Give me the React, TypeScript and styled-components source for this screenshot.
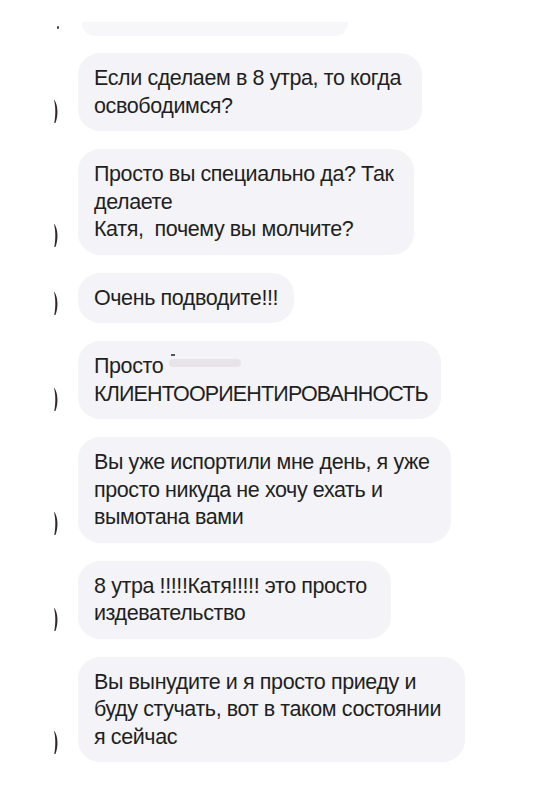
import React from "react";
import styled, { createGlobalStyle } from "styled-components";

const Global = createGlobalStyle`
  html, body { margin: 0; padding: 0; background: #ffffff; }
  body { font-family: "Liberation Sans", Arial, sans-serif; }
`;

const Page = styled.div`
  width: 543px;
  height: 800px;
  overflow: hidden;
  background: #ffffff;
  display: flex;
  flex-direction: column;
  gap: 18px;
  padding-top: 22px;
  box-sizing: border-box;
`;

const Row = styled.div`
  display: flex;
  align-items: flex-end;
`;

const AvatarCol = styled.div<{ $lift: number }>`
  width: 78px;
  flex: none;
  display: flex;
  justify-content: flex-end;
  padding-right: 19px;
  box-sizing: border-box;
  padding-bottom: ${(p) => p.$lift}px;
`;

const AvatarEdge = styled.svg`
  display: block;
`;

const Bubble = styled.div<{ $padRight: number }>`
  background: #f3f3f8;
  border-radius: 22px;
  padding: 12px ${(p) => p.$padRight}px 11px 16px;
  color: #1f1f22;
  font-size: 21.5px;
  line-height: 27.5px;
  letter-spacing: -0.4px;
`;

const PartialBubble = styled.div`
  width: 266px;
  height: 13px;
  margin-left: 4px;
  background: #f7f7fa;
  border-radius: 0 0 22px 22px;
  box-shadow: 0 1px 1px rgba(0, 0, 0, 0.03);
`;

const Line = styled.div<{ $tight?: boolean }>`
  white-space: pre;
  letter-spacing: ${(p) => (p.$tight ? "-0.85px" : "inherit")};
`;

const Redacted = styled.span`
  display: inline-block;
  position: relative;
  width: 72px;
  height: 8px;
  margin-left: 6px;
  vertical-align: 6px;
  border-radius: 4px;
  background: #e8e3e8;
  &::before {
    content: "";
    position: absolute;
    left: 2px;
    top: -5px;
    width: 4px;
    height: 1.5px;
    background: #555;
  }
`;

const TinyMark = styled.div`
  width: 2px;
  height: 3px;
  background: #444;
  border-radius: 1px;
`;

function Edge() {
  return (
    <AvatarEdge width="5" height="25" viewBox="0 0 5 25">
      <path
        d="M0.4 1 C3.8 6 4.8 16 1.4 24 L0.3 24 C1.8 16 1.6 7 0 1 Z"
        fill="#33262f"
      />
    </AvatarEdge>
  );
}

type Msg = { lines: React.ReactNode[]; padRight?: number; tight?: number };

const messages: Msg[] = [
  { lines: ["Если сделаем в 8 утра, то когда", "освободимся?"] },
  { lines: ["Просто вы специально да? Так", "делаете", "Катя,  почему вы молчите?"] },
  { lines: ["Очень подводите!!!"], padRight: 16 },
  {
    lines: [
      <>
        Просто
        <Redacted />
      </>,
      "КЛИЕНТООРИЕНТИРОВАННОСТЬ",
    ],
    padRight: 13,
    tight: 1,
  },
  { lines: ["Вы уже испортили мне день, я уже", "просто никуда не хочу ехать и", "вымотана вами"] },
  { lines: ["8 утра !!!!!Катя!!!!! это просто", "издевательство"], padRight: 24 },
  { lines: ["Вы вынудите и я просто приеду и", "буду стучать, вот в таком состоянии", "я сейчас"], padRight: 24 },
];

export default function App() {
  return (
    <>
      <Global />
      <Page>
        <Row>
          <AvatarCol $lift={6}>
            <TinyMark />
          </AvatarCol>
          <PartialBubble />
        </Row>
        {messages.map((m, i) => (
          <Row key={i}>
            <AvatarCol $lift={7}>
              <Edge />
            </AvatarCol>
            <Bubble $padRight={m.padRight ?? 21}>
              {m.lines.map((l, j) => (
                <Line key={j} $tight={m.tight === j}>
                  {l}
                </Line>
              ))}
            </Bubble>
          </Row>
        ))}
      </Page>
    </>
  );
}
